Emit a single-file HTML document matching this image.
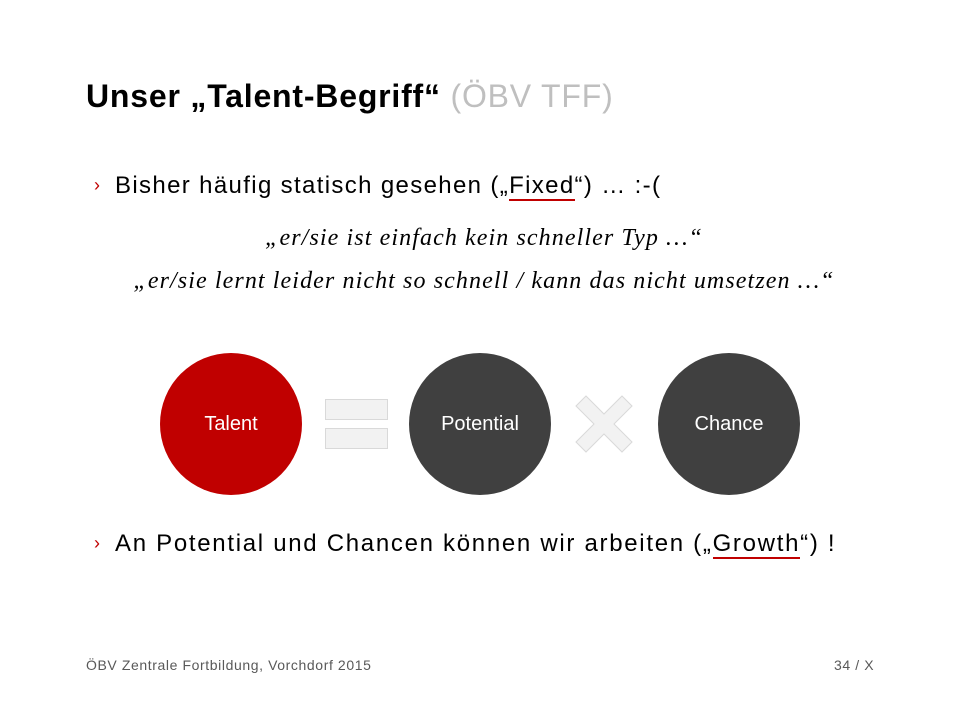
<!DOCTYPE html>
<html><head><meta charset="utf-8"><style>
body{margin:0;width:960px;height:720px;background:#fff;position:relative;overflow:hidden;font-family:"Liberation Sans",sans-serif}
.t{position:absolute;white-space:nowrap}
.c{position:absolute;width:142px;height:142px;border-radius:50%;top:353px;color:#fff;font-size:20px;display:flex;align-items:center;justify-content:center}
.bar{position:absolute;left:325px;width:61px;height:19px;background:#f2f2f2;border:1px solid #d9d9d9}
u{text-decoration:none;border-bottom:2px solid #c00000}
.b{color:#c00000;font-size:18px;position:absolute;left:0;top:3px}
</style></head><body>
<div class="t" style="left:86px;top:78px;font-size:32px;font-weight:bold;letter-spacing:0.8px;color:#000">Unser „Talent-Begriff“ <span style="font-weight:normal;color:#bfbfbf">(ÖBV TFF)</span></div>
<div class="t" style="left:94px;top:172px;font-size:24px;color:#000;letter-spacing:1.35px;padding-left:21px"><span class="b">›</span>Bisher häufig statisch gesehen („<u>Fixed</u>“) … :-(</div>
<div class="t" style="left:4px;width:960px;text-align:center;top:225px;font-family:'Liberation Serif',serif;font-style:italic;font-size:24px;letter-spacing:1.1px">„er/sie ist einfach kein schneller Typ …“</div>
<div class="t" style="left:4px;width:960px;text-align:center;top:268px;font-family:'Liberation Serif',serif;font-style:italic;font-size:24px;letter-spacing:1.1px">„er/sie lernt leider nicht so schnell / kann das nicht umsetzen …“</div>
<div class="c" style="left:160px;background:#c00000">Talent</div>
<div class="c" style="left:409px;background:#404040">Potential</div>
<div class="c" style="left:658px;background:#404040">Chance</div>
<div class="bar" style="top:399px"></div>
<div class="bar" style="top:428px"></div>
<svg style="position:absolute;left:574px;top:394px" width="60" height="60" viewBox="0 0 60 60"><path d="M12 2 L30 20 L48 2 L58 12 L40 30 L58 48 L48 58 L30 40 L12 58 L2 48 L20 30 L2 12 Z" fill="#f2f2f2" stroke="#d9d9d9" stroke-width="1"/></svg>
<div class="t" style="left:94px;top:530px;font-size:24px;color:#000;letter-spacing:1.7px;padding-left:21px"><span class="b">›</span>An Potential und Chancen können wir arbeiten („<u>Growth</u>“) !</div>
<div class="t" style="left:86px;top:657px;font-size:14px;color:#595959;letter-spacing:0.6px">ÖBV Zentrale Fortbildung, Vorchdorf 2015</div>
<div class="t" style="left:834px;top:657px;font-size:14px;color:#595959;letter-spacing:0.6px">34 / X</div>
</body></html>
